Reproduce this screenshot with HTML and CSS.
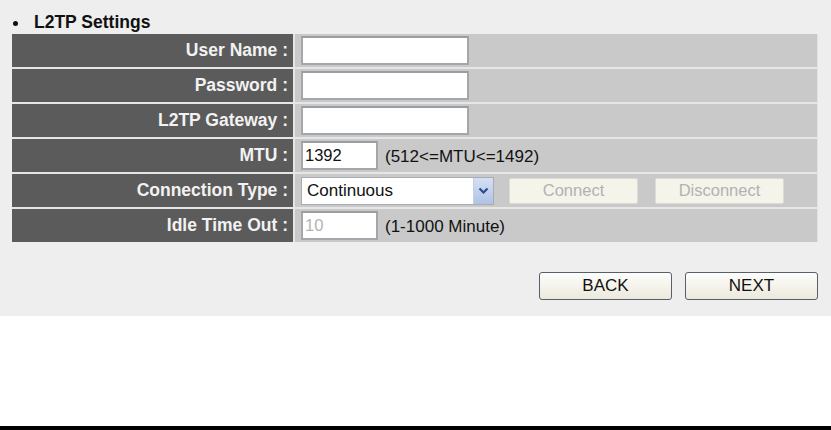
FILE: index.html
```html
<!DOCTYPE html>
<html lang="en">
<head>
  <meta charset="UTF-8" />
  <title>L2TP Settings</title>
  <link rel="stylesheet" href="styles.css">
</head>
<body>

  <div class="panel">
    <div class="section-title"><span class="bullet"></span>L2TP Settings</div>

    <div class="settings">
      <div class="label">User Name :</div>
      <div class="value"><div class="field wide"></div></div>

      <div class="label">Password :</div>
      <div class="value"><div class="field wide"></div></div>

      <div class="label">L2TP Gateway :</div>
      <div class="value"><div class="field wide"></div></div>

      <div class="label">MTU :</div>
      <div class="value">
        <div class="field short">1392</div>
        <span class="hint">(512&lt;=MTU&lt;=1492)</span>
      </div>

      <div class="label">Connection Type :</div>
      <div class="value">
        <div class="select">
          <span>Continuous</span>
          <span class="arrow">
            <svg width="11" height="8" viewBox="0 0 11 8"><path d="M1.5 1.5 L5.5 5.5 L9.5 1.5" fill="none" stroke="#2c4a8c" stroke-width="2.2"/></svg>
          </span>
        </div>
        <div class="btn-off">Connect</div>
        <div class="btn-off">Disconnect</div>
      </div>

      <div class="label">Idle Time Out :</div>
      <div class="value">
        <div class="field short disabled">10</div>
        <span class="hint">(1-1000 Minute)</span>
      </div>
    </div>

    <div class="actions">
      <div class="btn">BACK</div>
      <div class="btn">NEXT</div>
    </div>
  </div>

  <div class="footer-bar"></div>

</body>
</html>
```

FILE: styles.css
```css
* { margin: 0; padding: 0; box-sizing: border-box; }

html, body { overflow: hidden; }

body {
  font-family: "Liberation Sans", Arial, sans-serif;
  background: #fff;
  height: 430px;
  display: flex;
  flex-direction: column;
}

.panel {
  background: #eeeeee;
  height: 316px;
  padding: 12px 13px 0 12px;
  display: flex;
  flex-direction: column;
}

.section-title {
  display: flex;
  align-items: center;
  height: 21px;
  font-size: 17.5px;
  font-weight: bold;
  color: #111;
}

.bullet {
  width: 5px;
  height: 5px;
  border-radius: 50%;
  background: #111;
  margin: 1px 16px 0 1px;
}

.settings {
  margin-top: 1px;
  display: grid;
  grid-template-columns: 281px minmax(0, 1fr);
  grid-auto-rows: 33px;
  column-gap: 2px;
  row-gap: 2px;
  background: #e6e6e6;
  border-right: 1px solid #e2e2e2;
}

.label {
  background: #5b5b5b;
  color: #f2f2f2;
  font-size: 17.5px;
  font-weight: bold;
  display: flex;
  align-items: center;
  justify-content: flex-end;
  padding-right: 5px;
}

.value {
  background: #c9c9c9;
  display: flex;
  align-items: center;
  padding-left: 6px;
  font-size: 17px;
  color: #111;
  min-width: 0;
}

.field {
  height: 29px;
  background: #fff;
  border: 2px solid #a3a7ab;
  border-top-color: #9a9ea2;
  display: flex;
  align-items: center;
  padding-left: 2px;
  font-size: 16.5px;
}

.field.wide { width: 168px; }
.field.short { width: 77px; }
.field.disabled { color: #b3b3b3; }

.hint {
  margin-left: 7px;
  margin-top: 3px;
}

.select {
  width: 193px;
  height: 28px;
  background: #fff;
  border: 1px solid #a9adb2;
  display: flex;
  align-items: center;
  justify-content: space-between;
  padding-left: 5px;
  margin-top: 1px;
}

.arrow {
  width: 20px;
  height: 26px;
  background: linear-gradient(#d4e0f5, #b0c2e6);
  border-left: 1px solid #c4cfe4;
  display: flex;
  align-items: center;
  justify-content: center;
}

.btn-off {
  width: 129px;
  height: 26px;
  background: #f4f4ea;
  border: 1px solid #dcdcd2;
  border-radius: 2px;
  color: #b2b2b2;
  font-size: 16.5px;
  display: flex;
  align-items: center;
  justify-content: center;
  margin-left: 15px;
}

.btn-off + .btn-off { margin-left: 17px; }

.actions {
  display: flex;
  justify-content: flex-end;
  gap: 13px;
  margin-top: 30px;
}

.btn {
  width: 133px;
  height: 28px;
  border: 1px solid #56606c;
  border-radius: 3px;
  background: linear-gradient(#fdfdfb, #ece9dc);
  font-size: 17px;
  color: #111;
  display: flex;
  align-items: center;
  justify-content: center;
}

.footer-bar {
  margin-top: auto;
  height: 4px;
  background: #000;
}
```
